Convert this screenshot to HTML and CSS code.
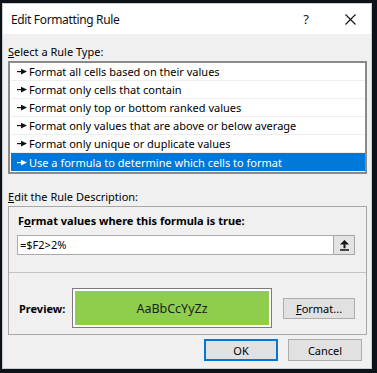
FILE: index.html
```html
<!DOCTYPE html>
<html>
<head>
<meta charset="utf-8">
<link rel="stylesheet" href="styles.css">
</head>
<body>
<div class="window">
  <div class="titlebar">
    <span class="title">Edit Formatting Rule</span>
    <span class="cap help">?</span>
    <span class="cap close"><svg width="11" height="11" viewBox="0 0 11 11"><path d="M0.5 0.5L10.5 10.5M10.5 0.5L0.5 10.5" stroke="#111" stroke-width="1.1" fill="none"/></svg></span>
  </div>
  <div class="content">
    <div class="label"><u>S</u>elect a Rule Type:</div>
    <ul class="list">
      <li class="row"><svg class="arr" width="10" height="7" viewBox="0 0 10 7"><rect x="0" y="3" width="5" height="1.2"/><path d="M4 0.8L10 3.6L4 6.4Z"/></svg>Format all cells based on their values</li>
      <li class="row"><svg class="arr" width="10" height="7" viewBox="0 0 10 7"><rect x="0" y="3" width="5" height="1.2"/><path d="M4 0.8L10 3.6L4 6.4Z"/></svg>Format only cells that contain</li>
      <li class="row"><svg class="arr" width="10" height="7" viewBox="0 0 10 7"><rect x="0" y="3" width="5" height="1.2"/><path d="M4 0.8L10 3.6L4 6.4Z"/></svg>Format only top or bottom ranked values</li>
      <li class="row"><svg class="arr" width="10" height="7" viewBox="0 0 10 7"><rect x="0" y="3" width="5" height="1.2"/><path d="M4 0.8L10 3.6L4 6.4Z"/></svg>Format only values that are above or below average</li>
      <li class="row"><svg class="arr" width="10" height="7" viewBox="0 0 10 7"><rect x="0" y="3" width="5" height="1.2"/><path d="M4 0.8L10 3.6L4 6.4Z"/></svg>Format only unique or duplicate values</li>
      <li class="row selected"><svg class="arr" width="10" height="7" viewBox="0 0 10 7"><rect x="0" y="3" width="5" height="1.2"/><path d="M4 0.8L10 3.6L4 6.4Z"/></svg>Use a formula to determine which cells to format</li>
    </ul>
    <div class="label label2"><u>E</u>dit the Rule Description:</div>
    <div class="desc">
      <div class="desc-top">
        <div class="bold heading">F<u>o</u>rmat values where this formula is true:</div>
        <div class="input">
          <div class="field">=$F2&gt;2%</div>
          <div class="collapse"><svg width="9" height="11" viewBox="0 0 9 11"><path d="M4.5 0L9 4.6H0Z" fill="#111"/><rect x="3.5" y="4.4" width="2" height="3.8" fill="#111"/><rect x="0" y="9.2" width="9" height="1.5" fill="#111"/></svg></div>
        </div>
      </div>
      <div class="desc-bottom">
        <span class="bold plabel">Preview:</span>
        <div class="preview"><div class="swatch">AaBbCcYyZz</div></div>
        <button class="btn fmt"><u>F</u>ormat...</button>
      </div>
    </div>
    <div class="actions">
      <button class="btn ok">OK</button>
      <button class="btn">Cancel</button>
    </div>
  </div>
</div>
</body>
</html>
```
FILE: styles.css
```css
html, body {
  margin: 0;
  padding: 0;
}
body {
  background: #0d1118;
  width: 377px;
  height: 373px;
  overflow: hidden;
  font-family: "Noto Sans", "DejaVu Sans", sans-serif;
  font-size: 11px;
  color: #000;
}
.window {
  box-sizing: border-box;
  margin: 3px 0 0 2px;
  width: 370px;
  height: 366px;
  border: 1px solid #c9ccd1;
  background: #f0f0f0;
  display: flex;
  flex-direction: column;
}
.titlebar {
  height: 30px;
  background: #fff;
  display: flex;
  align-items: center;
}
.title {
  flex: 1;
  padding-left: 8px;
  font-size: 12px;
  letter-spacing: -0.35px;
  color: #111;
}
.cap {
  display: flex;
  align-items: center;
  justify-content: center;
  height: 30px;
}
.help {
  width: 46px;
  font-size: 13px;
  color: #222;
}
.close {
  width: 42px;
}
.content {
  flex: 1;
  padding: 10px 4px 0 5px;
}
.label {
  height: 16px;
  line-height: 16px;
  margin-bottom: 1px;
}
.label2 {
  margin-top: 15px;
}
.list {
  list-style: none;
  margin: 0;
  padding: 0 0 1px 0;
  background: #fff;
  border: 2px solid #8a8a8a;
}
.row {
  box-sizing: border-box;
  height: 18px;
  margin: 0 0 0 1px;
  padding-left: 6px;
  display: flex;
  align-items: center;
  border-bottom: 1px solid #eeeeee;
  line-height: 17px;
  white-space: nowrap;
}
.arr {
  fill: #111;
  margin-right: 2px;
  flex: none;
}
.selected {
  background: #0078d7;
  color: #fff;
  border-bottom: none;
}
.selected .arr {
  fill: #fff;
}
.desc {
  border: 1px solid #a8a8a8;
}
.desc-top {
  padding: 6px 11px 17px 8px;
}
.bold {
  font-weight: bold;
}
.heading {
  height: 16px;
  line-height: 16px;
  padding-left: 1px;
  margin-bottom: 6px;
}
.input {
  display: flex;
  height: 20px;
}
.field {
  flex: 1;
  box-sizing: border-box;
  border: 1px solid #ababab;
  border-right: none;
  background: #fff;
  padding-left: 2px;
  line-height: 18px;
}
.collapse {
  box-sizing: border-box;
  width: 22px;
  border: 1px solid #a6a6a6;
  background: #e3e3e3;
  display: flex;
  align-items: center;
  justify-content: center;
}
.desc-bottom {
  border-top: 1px solid #c4c4c4;
  padding: 15px 0 6px 9px;
  display: flex;
  align-items: center;
}
.plabel {
  width: 54px;
  padding-left: 1px;
  box-sizing: border-box;
}
.preview {
  box-sizing: border-box;
  width: 200px;
  height: 40px;
  border: 1px solid #7a7a7a;
  background: #fff;
  padding: 2px;
}
.swatch {
  height: 100%;
  background: #8fce4d;
  display: flex;
  align-items: center;
  justify-content: center;
  font-size: 12.5px;
  color: #1c1c1c;
}
.btn {
  box-sizing: border-box;
  font-family: "Noto Sans", "DejaVu Sans", sans-serif;
  font-size: 11px;
  color: #000;
  background: #e1e1e1;
  border: 1px solid #adadad;
  padding: 0;
  margin: 0;
  height: 22px;
  width: 74px;
}
.fmt {
  margin-left: 11px;
  width: 72px;
  height: 21px;
}
.ok {
  border: 2px solid #0078d7;
}
.actions {
  display: flex;
  justify-content: flex-end;
  gap: 10px;
  margin-top: 4px;
  padding-right: 5px;
}
```
